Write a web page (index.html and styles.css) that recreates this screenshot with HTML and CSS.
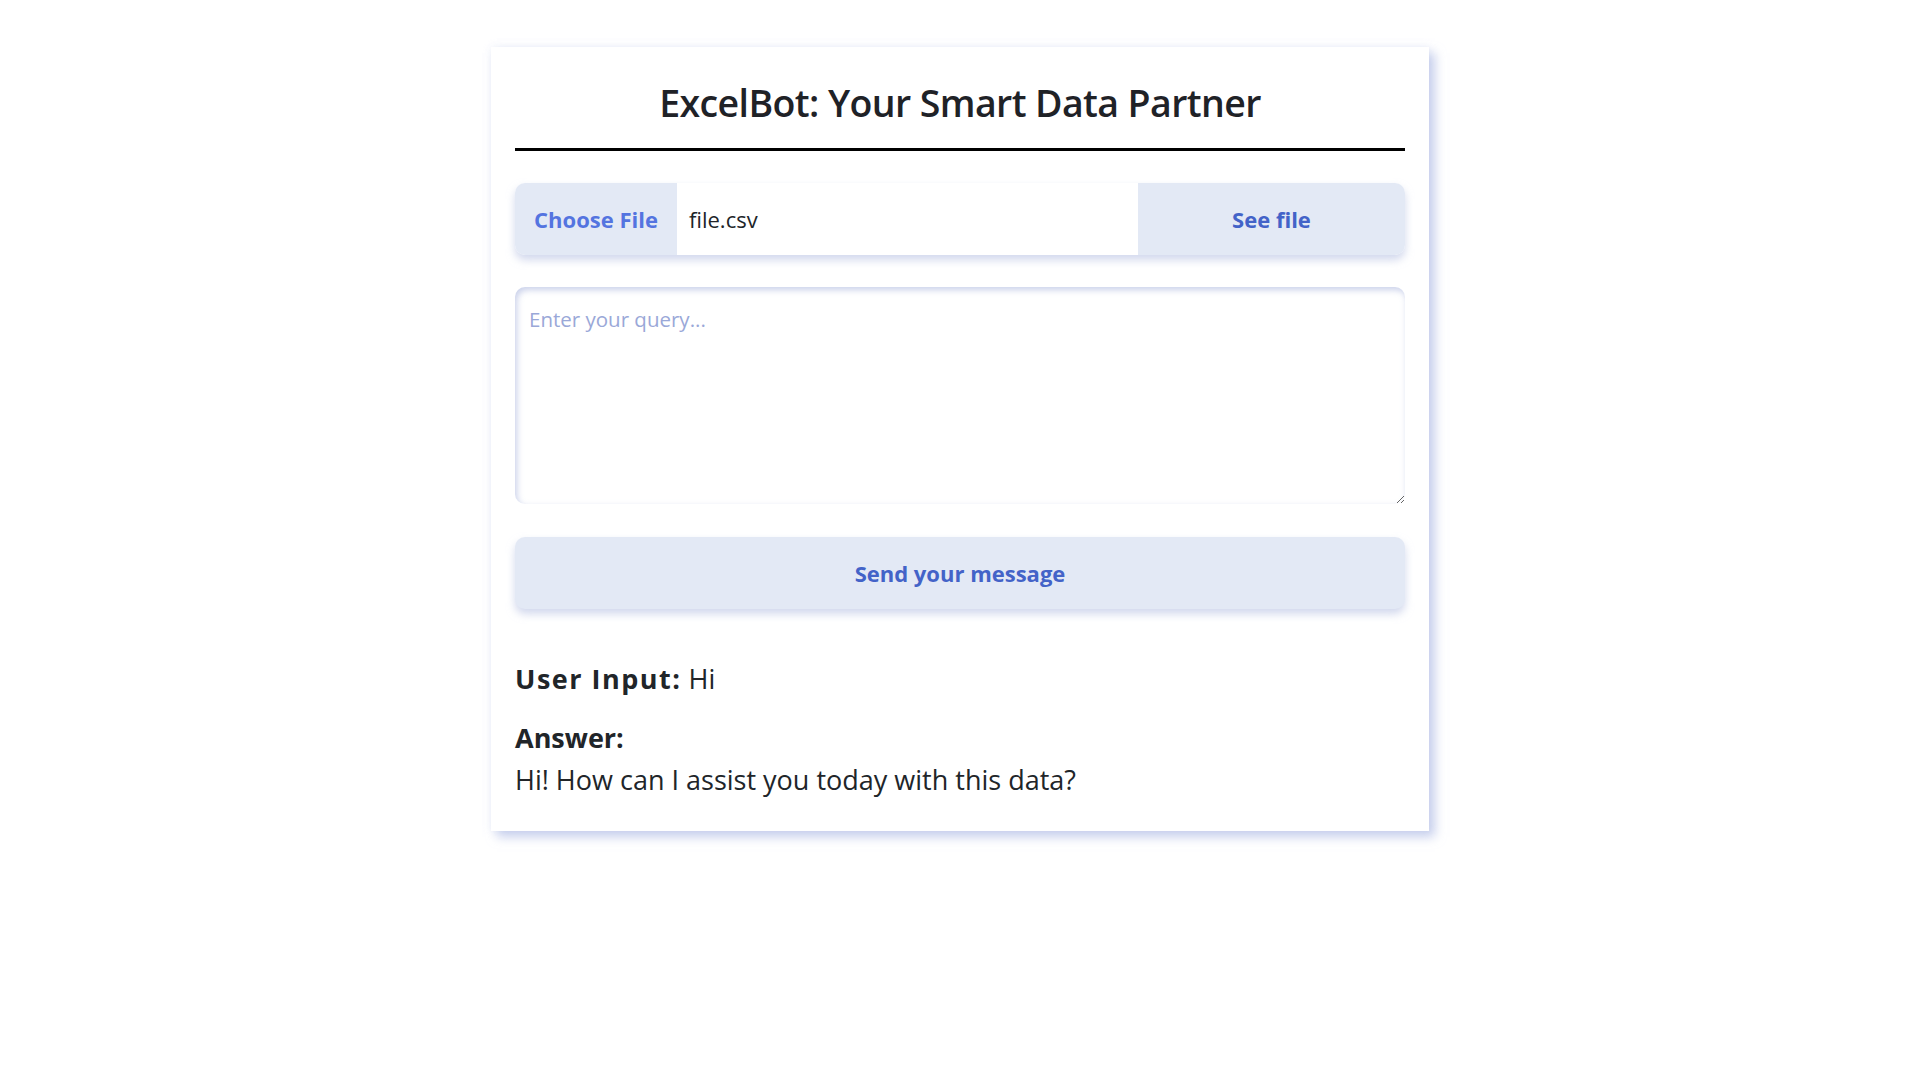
FILE: index.html
```html
<!DOCTYPE html>
<html lang="en">
<head>
<meta charset="utf-8">
<title>ExcelBot</title>
<link rel="stylesheet" href="styles.css">
</head>
<body>
<main class="card">
  <h1 class="title">ExcelBot: Your Smart Data Partner</h1>
  <hr class="rule">
  <div class="file-row">
    <label class="choose">Choose File</label>
    <span class="file-name">file.csv</span>
    <button class="see-file">See file</button>
  </div>
  <textarea class="query" placeholder="Enter your query..."></textarea>
  <button class="send">Send your message</button>
  <section class="result">
    <p class="user-line"><strong class="label-spaced">User Input:</strong> Hi</p>
    <p class="answer-label">Answer:</p>
    <p class="answer-text">Hi! How can I assist you today with this data?</p>
  </section>
</main>
</body>
</html>
```

FILE: styles.css
```css
* { box-sizing: border-box; }
html, body { margin: 0; padding: 0; background: #ffffff; }
body {
  font-family: "Open Sans", "Noto Sans", sans-serif;
  color: #212529;
  min-height: 100vh;
  padding-bottom: 60px;
}
.card {
  width: 938px;
  margin: 47px auto 0;
  padding: 28px 24px 32px;
  background: #fff;
  box-shadow: 6px 6px 10px rgba(165, 178, 225, 0.6), 0 0 8px rgba(220, 226, 245, 0.45);
  display: flex;
  flex-direction: column;
}
.title {
  margin: 0;
  text-align: center;
  font-size: 37.5px;
  font-weight: 560;
  line-height: 56px;
  color: #1f2227;
  letter-spacing: -0.6px;
}
.rule {
  margin: 17px 0 0;
  border: 0;
  height: 3px;
  background: #000;
}
.file-row {
  margin-top: 32px;
  display: flex;
  height: 72px;
  border-radius: 10px;
  background: #fff;
  box-shadow: 0 5px 8px rgba(180, 190, 225, 0.6);
  overflow: hidden;
}
.choose {
  width: 162px;
  background: #e3e9f5;
  color: #5474e0;
  font-weight: 700;
  font-size: 22px;
  display: flex;
  align-items: center;
  justify-content: center;
}
.file-name {
  flex: 1;
  display: flex;
  align-items: center;
  padding-left: 12px;
  font-size: 22px;
  color: #212529;
}
.see-file {
  width: 267px;
  border: 0;
  background: #e3e9f5;
  color: #4363c8;
  font-family: inherit;
  font-weight: 700;
  font-size: 22px;
  cursor: pointer;
}
.query {
  margin-top: 32px;
  height: 217px;
  width: 100%;
  border: 0;
  border-radius: 10px;
  padding: 18px 14px;
  font-family: inherit;
  font-size: 20.5px;
  color: #212529;
  background: #fff;
  box-shadow: inset 2px 3px 6px rgba(180, 190, 225, 0.7);
  resize: vertical;
  outline: none;
}
.query::placeholder { color: #9aa8d8; }
.send {
  margin-top: 33px;
  height: 72px;
  border: 0;
  border-radius: 10px;
  background: #e3e9f5;
  color: #4363c8;
  font-family: inherit;
  font-weight: 700;
  font-size: 22px;
  box-shadow: 0 5px 8px rgba(180, 190, 225, 0.6);
  cursor: pointer;
}
.result {
  margin-top: 51px;
  font-size: 27px;
}
.result p { margin: 0; }
.user-line { line-height: 38px; }
.label-spaced { letter-spacing: 1.5px; font-weight: 700; }
.answer-label { margin-top: 21px !important; font-weight: 700; line-height: 38px; }
.answer-text { margin-top: 4px !important; line-height: 38px; }
```
